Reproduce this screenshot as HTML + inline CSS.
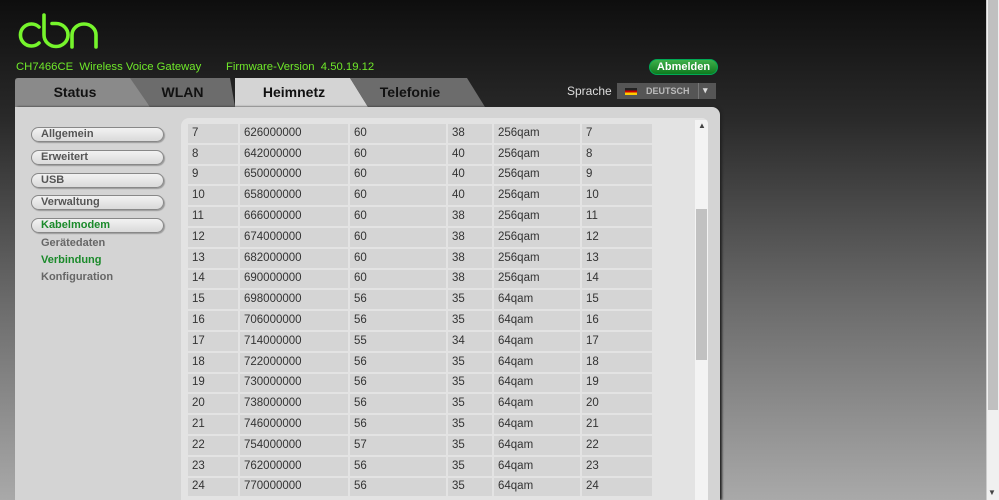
<!DOCTYPE html>
<html style="height:500px;overflow:hidden"><head><meta charset="utf-8"><style>
*{margin:0;padding:0;box-sizing:border-box}
body{width:999px;height:500px;overflow:hidden;background:linear-gradient(#0e0e0e 0px,#2a2a2a 120px,#6a6a6a 300px,#a9a9a9 500px);font-family:"Liberation Sans",sans-serif;position:relative}
#w{position:absolute;left:0;top:0;width:999px;height:500px;overflow:hidden}
.abs{position:absolute}
.g{color:#6fe82a;font-size:11.3px}
.tab{position:absolute;top:78px;height:29px;font-weight:bold;font-size:14px;color:#111;text-align:center;line-height:28px}
.pill{position:absolute;left:31px;width:133px;height:15px;border:1px solid #888;border-radius:8px;background:linear-gradient(#f2f2f2,#dadada);box-shadow:1px 1px 1px #999;font-size:11px;font-weight:bold;color:#555;padding-left:9px;line-height:13px}
.sub{position:absolute;left:41px;font-size:11px;font-weight:bold;color:#666}
table{border-collapse:separate;border-spacing:2px;position:absolute;left:186px;top:122px}
td{background:#d5d5d5;height:18.8px;font-size:11.5px;color:#333;padding:0 0 0 4px;line-height:17px;vertical-align:middle}
</style></head><body><div id="w">
<svg class="abs" style="left:14px;top:12px" width="90" height="40" viewBox="14 12 90 40">
<g fill="none" stroke="#76f52c" stroke-width="3.6" stroke-linecap="round">
<path d="M39 27 A11 11 0 1 0 39 43"/>
<path d="M44 15 V35 A12 11.5 0 1 0 56 23.5 H52"/>
<path d="M72 47 V35 A12 11 0 0 1 96 35 V47"/>
</g></svg>
<div class="abs g" style="left:16px;top:61px">CH7466CE&nbsp; Wireless Voice Gateway</div>
<div class="abs g" style="left:226px;top:61px">Firmware-Version&nbsp; 4.50.19.12</div>
<div class="abs" style="left:649px;top:59px;width:69px;height:16px;border-radius:8px;background:linear-gradient(#3eb04a,#0f7a1f);color:#fff;font-size:11px;font-weight:bold;text-align:center;line-height:15px;border:1px solid #0a5;">Abmelden</div>
<div class="abs" style="left:567px;top:84px;color:#ddd;font-size:12px">Sprache</div>
<div class="abs" style="left:617px;top:83px;width:99px;height:16px;background:#555;color:#bbb;font-size:9px;font-weight:bold;line-height:16px">
<span class="abs" style="left:8px;top:5px;width:12px;height:7px;background:linear-gradient(#222 33%,#c00 33%,#c00 66%,#fc0 66%)"></span>
<span class="abs" style="left:29px">DEUTSCH</span>
<span class="abs" style="left:81px;top:0;width:1px;height:16px;background:#777"></span>
<span class="abs" style="left:86px;top:-1px;color:#ddd">▾</span></div>
<svg class="abs" style="left:15px;top:78px" width="475" height="30">
<path d="M0 29 V3 Q0 0 3 0 H117 L135 29Z" fill="#8a8a8a"/>
<path d="M115 0 H215 L220 29 H135Z" fill="#6c6c6c"/>
<path d="M220 29 V0 H335 L353 29Z" fill="#d4d4d4"/>
<path d="M335 0 H452 L470 29 H353Z" fill="#6c6c6c"/>
</svg>
<div class="tab" style="left:15px;width:120px">Status</div>
<div class="tab" style="left:135px;width:95px">WLAN</div>
<div class="tab" style="left:235px;width:118px">Heimnetz</div>
<div class="tab" style="left:355px;width:110px">Telefonie</div>
<div class="abs" style="left:15px;top:107px;width:705px;height:393px;background:#d4d4d4;border-top-right-radius:8px;box-shadow:2px 0 2px #222"></div>
<div class="pill" style="top:127px">Allgemein</div>
<div class="pill" style="top:150px">Erweitert</div>
<div class="pill" style="top:173px">USB</div>
<div class="pill" style="top:195px">Verwaltung</div>
<div class="pill" style="top:218px;color:#1a8a2a">Kabelmodem</div>
<div class="sub" style="top:237px">Gerätedaten</div>
<div class="sub" style="top:254px;color:#1a8a2a">Verbindung</div>
<div class="sub" style="top:271px">Konfiguration</div>
<div class="abs" style="left:181px;top:118px;width:527px;height:382px;background:#e3e3e3;border-top-left-radius:8px;border-top-right-radius:6px;overflow:hidden">
<div class="abs" style="left:514px;top:2px;width:13px;height:390px;background:#f3f3f3"></div>
<div class="abs" style="left:515px;top:91px;width:11px;height:151px;background:#c1c1c1"></div>
<div class="abs" style="left:517px;top:3px;font-size:8px;color:#444">▲</div>
<table style="left:5px;top:4px">
<tr><td style="width:50px">7</td><td style="width:108px">626000000</td><td style="width:96px">60</td><td style="width:44px">38</td><td style="width:86px">256qam</td><td style="width:70px">7</td></tr>
<tr><td>8</td><td>642000000</td><td>60</td><td>40</td><td>256qam</td><td>8</td></tr>
<tr><td>9</td><td>650000000</td><td>60</td><td>40</td><td>256qam</td><td>9</td></tr>
<tr><td>10</td><td>658000000</td><td>60</td><td>40</td><td>256qam</td><td>10</td></tr>
<tr><td>11</td><td>666000000</td><td>60</td><td>38</td><td>256qam</td><td>11</td></tr>
<tr><td>12</td><td>674000000</td><td>60</td><td>38</td><td>256qam</td><td>12</td></tr>
<tr><td>13</td><td>682000000</td><td>60</td><td>38</td><td>256qam</td><td>13</td></tr>
<tr><td>14</td><td>690000000</td><td>60</td><td>38</td><td>256qam</td><td>14</td></tr>
<tr><td>15</td><td>698000000</td><td>56</td><td>35</td><td>64qam</td><td>15</td></tr>
<tr><td>16</td><td>706000000</td><td>56</td><td>35</td><td>64qam</td><td>16</td></tr>
<tr><td>17</td><td>714000000</td><td>55</td><td>34</td><td>64qam</td><td>17</td></tr>
<tr><td>18</td><td>722000000</td><td>56</td><td>35</td><td>64qam</td><td>18</td></tr>
<tr><td>19</td><td>730000000</td><td>56</td><td>35</td><td>64qam</td><td>19</td></tr>
<tr><td>20</td><td>738000000</td><td>56</td><td>35</td><td>64qam</td><td>20</td></tr>
<tr><td>21</td><td>746000000</td><td>56</td><td>35</td><td>64qam</td><td>21</td></tr>
<tr><td>22</td><td>754000000</td><td>57</td><td>35</td><td>64qam</td><td>22</td></tr>
<tr><td>23</td><td>762000000</td><td>56</td><td>35</td><td>64qam</td><td>23</td></tr>
<tr><td>24</td><td>770000000</td><td>56</td><td>35</td><td>64qam</td><td>24</td></tr>
</table>
</div>
<div class="abs" style="left:986px;top:0;width:13px;height:500px;background:#f0f0f0;border-left:1px solid #ccc"></div>
<div class="abs" style="left:988px;top:0;width:10px;height:410px;background:#c0c0c0"></div>
<div class="abs" style="left:988px;top:488px;font-size:8px;color:#444">▼</div>
</div></body></html>
